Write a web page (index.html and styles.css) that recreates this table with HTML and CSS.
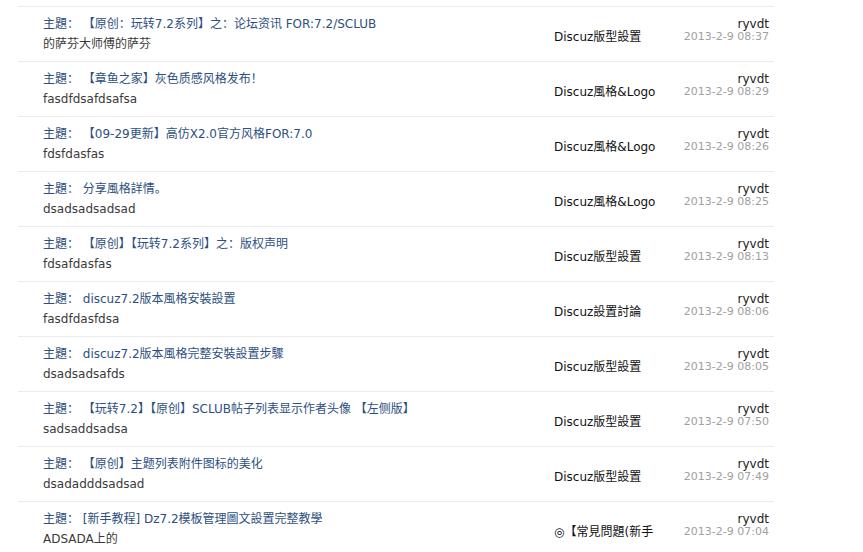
FILE: index.html
```html
<!DOCTYPE html>
<html>
<head>
<meta charset="utf-8">
<link rel="stylesheet" href="styles.css">
</head>
<body>
<div class="list">
  <div class="row">
    <div class="topic"><a class="title" href="#">主題： 【原创：玩转7.2系列】之：论坛资讯 FOR:7.2/SCLUB</a><div class="msg">的萨芬大师傅的萨芬</div></div>
    <div class="forum">Discuz版型設置</div>
    <div class="meta"><div class="author">ryvdt</div><div class="date">2013-2-9 08:37</div></div>
  </div>
  <div class="row">
    <div class="topic"><a class="title" href="#">主題： 【章鱼之家】灰色质感风格发布！</a><div class="msg">fasdfdsafdsafsa</div></div>
    <div class="forum">Discuz風格&amp;Logo</div>
    <div class="meta"><div class="author">ryvdt</div><div class="date">2013-2-9 08:29</div></div>
  </div>
  <div class="row">
    <div class="topic"><a class="title" href="#">主題： 【09-29更新】高仿X2.0官方风格FOR:7.0</a><div class="msg">fdsfdasfas</div></div>
    <div class="forum">Discuz風格&amp;Logo</div>
    <div class="meta"><div class="author">ryvdt</div><div class="date">2013-2-9 08:26</div></div>
  </div>
  <div class="row">
    <div class="topic"><a class="title" href="#">主題： 分享風格詳情。</a><div class="msg">dsadsadsadsad</div></div>
    <div class="forum">Discuz風格&amp;Logo</div>
    <div class="meta"><div class="author">ryvdt</div><div class="date">2013-2-9 08:25</div></div>
  </div>
  <div class="row">
    <div class="topic"><a class="title" href="#">主題： 【原创】【玩转7.2系列】之：版权声明</a><div class="msg">fdsafdasfas</div></div>
    <div class="forum">Discuz版型設置</div>
    <div class="meta"><div class="author">ryvdt</div><div class="date">2013-2-9 08:13</div></div>
  </div>
  <div class="row">
    <div class="topic"><a class="title" href="#">主題： discuz7.2版本風格安裝設置</a><div class="msg">fasdfdasfdsa</div></div>
    <div class="forum">Discuz設置討論</div>
    <div class="meta"><div class="author">ryvdt</div><div class="date">2013-2-9 08:06</div></div>
  </div>
  <div class="row">
    <div class="topic"><a class="title" href="#">主題： discuz7.2版本風格完整安裝設置步驟</a><div class="msg">dsadsadsafds</div></div>
    <div class="forum">Discuz版型設置</div>
    <div class="meta"><div class="author">ryvdt</div><div class="date">2013-2-9 08:05</div></div>
  </div>
  <div class="row">
    <div class="topic"><a class="title" href="#">主題： 【玩转7.2】【原创】SCLUB帖子列表显示作者头像 【左侧版】</a><div class="msg">sadsaddsadsa</div></div>
    <div class="forum">Discuz版型設置</div>
    <div class="meta"><div class="author">ryvdt</div><div class="date">2013-2-9 07:50</div></div>
  </div>
  <div class="row">
    <div class="topic"><a class="title" href="#">主題： 【原创】主题列表附件图标的美化</a><div class="msg">dsadadddsadsad</div></div>
    <div class="forum">Discuz版型設置</div>
    <div class="meta"><div class="author">ryvdt</div><div class="date">2013-2-9 07:49</div></div>
  </div>
  <div class="row">
    <div class="topic"><a class="title" href="#">主題： [新手教程] Dz7.2模板管理圖文設置完整教學</a><div class="msg">ADSADA上的</div></div>
    <div class="forum">◎【常見問題(新手</div>
    <div class="meta"><div class="author">ryvdt</div><div class="date">2013-2-9 07:04</div></div>
  </div>
</div>
</body>
</html>
```

FILE: styles.css
```css
html, body {
  margin: 0;
  padding: 0;
  background: #fff;
}

body {
  font-family: "DejaVu Sans", "Noto Sans CJK SC", sans-serif;
  font-size: 12px;
  color: #333;
  overflow: hidden;
}

.list {
  margin: 6px 0 0 18px;
  width: 756px;
}

.row {
  display: grid;
  grid-template-columns: 536px 126px 1fr;
  height: 54px;
  border-top: 1px solid #ebebeb;
  align-items: start;
}

.topic {
  padding: 7px 0 0 25px;
  line-height: 20px;
  white-space: nowrap;
  overflow: hidden;
}

.title {
  display: block;
  color: #2d4f80;
  text-decoration: none;
}

.msg {
  color: #3a3a3a;
}

.forum {
  padding-top: 20px;
  line-height: 20px;
  color: #111;
  white-space: nowrap;
  overflow: hidden;
}

.meta {
  padding: 10px 5px 0 0;
  text-align: right;
}

.author {
  line-height: 14px;
  color: #222;
}

.date {
  font-size: 11px;
  line-height: 12px;
  color: #a0a0a0;
}
```
